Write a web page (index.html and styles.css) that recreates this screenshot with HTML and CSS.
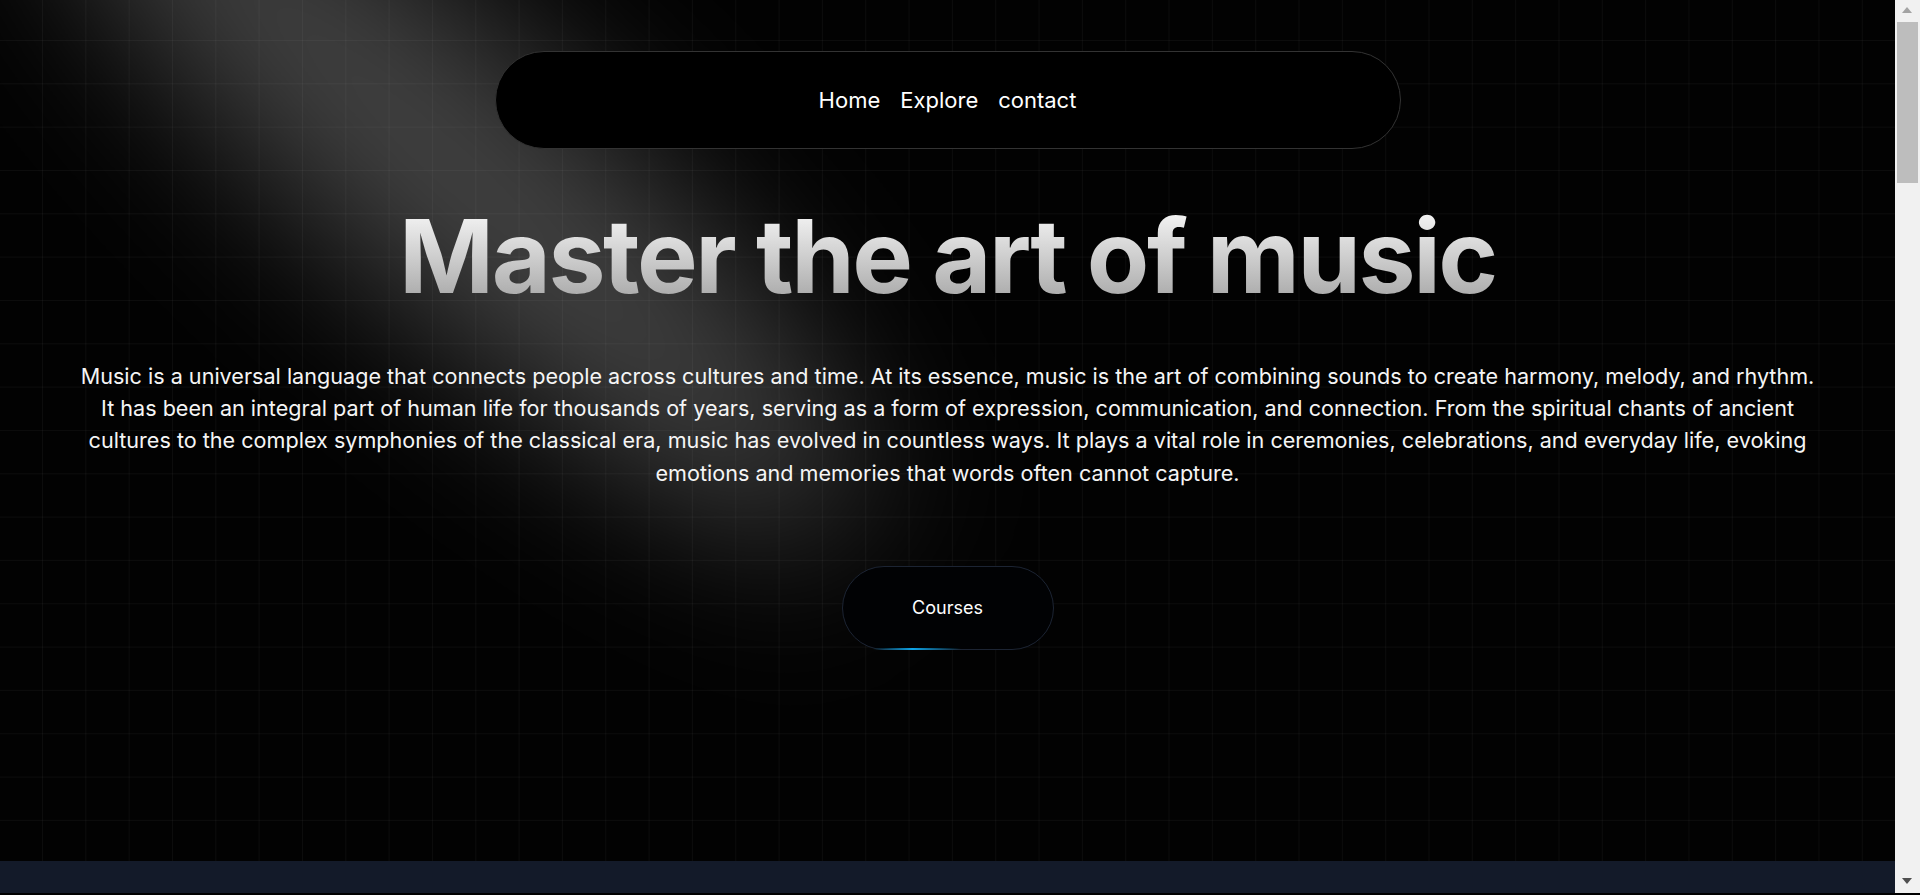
FILE: index.html
```html
<!DOCTYPE html>
<html lang="en">
<head>
<meta charset="utf-8">
<title>Master the art of music</title>
<link rel="stylesheet" href="styles.css">
</head>
<body>
<main class="page">
  <section class="hero">
    <svg class="spotlight" width="1400" height="1000" viewBox="0 0 1400 1000" aria-hidden="true">
      <defs>
        <filter id="blur" filterUnits="userSpaceOnUse" x="-800" y="-800" width="3000" height="3000">
          <feGaussianBlur stdDeviation="80"/>
        </filter>
      </defs>
      <ellipse cx="450" cy="165" rx="540" ry="130" transform="rotate(42 450 165)" fill="#ffffff" fill-opacity="0.25" filter="url(#blur)"/>
    </svg>
    <div class="hero-inner">
      <nav class="nav-pill">
        <a class="nav-link" href="#">Home</a>
        <a class="nav-link" href="#">Explore</a>
        <a class="nav-link" href="#">contact</a>
      </nav>
      <h1 class="title">Master the art of music</h1>
      <p class="lead">Music is a universal language that connects people across cultures and time. At its essence, music is the art of combining sounds to create harmony, melody, and rhythm. It has been an integral part of human life for thousands of years, serving as a form of expression, communication, and connection. From the spiritual chants of ancient cultures to the complex symphonies of the classical era, music has evolved in countless ways. It plays a vital role in ceremonies, celebrations, and everyday life, evoking emotions and memories that words often cannot capture.</p>
      <button class="courses-btn" type="button"><span class="btn-line"></span>Courses</button>
    </div>
  </section>
  <section class="next-section"></section>
</main>
<div class="fake-scrollbar" aria-hidden="true">
  <span class="sb-arrow sb-up"></span>
  <span class="sb-thumb"></span>
  <span class="sb-arrow sb-down"></span>
</div>
<div class="frame-edge" aria-hidden="true"></div>
</body>
</html>
```
FILE: styles.css
```css
* { box-sizing: border-box; }
html, body { margin: 0; padding: 0; }
body {
  background: #020202;
  font-family: Inter, "Noto Sans", "Liberation Sans", sans-serif;
  color: #fff;
}
.page {
  width: calc(100% - 25px);
  display: flex;
  flex-direction: column;
}
.hero {
  position: relative;
  height: 861px;
  overflow: hidden;
  background-color: #020202;
  background-image:
    linear-gradient(to right, rgba(255,255,255,0.04) 1px, transparent 1px),
    linear-gradient(to bottom, rgba(255,255,255,0.04) 1px, transparent 1px);
  background-size: 43.33px 43.33px;
  background-position: 42px 40px;
}
.spotlight {
  position: absolute;
  left: 0;
  top: 0;
  pointer-events: none;
  z-index: 1;
  overflow: visible;
}
.hero-inner {
  position: relative;
  z-index: 2;
  display: flex;
  flex-direction: column;
  align-items: center;
  padding-top: 51px;
}
.nav-pill {
  width: 906px;
  height: 98px;
  border: 1px solid #333;
  border-radius: 49px;
  background: #000;
  display: flex;
  align-items: center;
  justify-content: center;
  gap: 20px;
}
.nav-link {
  color: #fff;
  text-decoration: none;
  font-size: 22px;
}
.title {
  margin: 56px 0 0;
  font-size: 102px;
  line-height: 1;
  font-weight: 700;
  letter-spacing: -0.024em;
  text-align: center;
  background-image: linear-gradient(to bottom, #fafafa, #a3a3a3);
  -webkit-background-clip: text;
  background-clip: text;
  color: transparent;
}
.lead {
  margin: 53px 0 0;
  width: 1745px;
  font-size: 21.6px;
  line-height: 32.2px;
  text-align: center;
  color: #f5f5f5;
}
.courses-btn {
  margin-top: 77px;
  position: relative;
  width: 212px;
  height: 84px;
  border-radius: 42px;
  border: 1px solid #1c2433;
  background: #010204;
  color: #fff;
  font-family: Inter, "Noto Sans", sans-serif;
  font-size: 18px;
  cursor: pointer;
}
.btn-line {
  position: absolute;
  left: 30px;
  bottom: -1px;
  width: 88px;
  height: 2px;
  background: linear-gradient(to right, rgba(14,165,233,0), #0ea5e9 45%, rgba(14,165,233,0));
}
.next-section {
  height: 3925px;
  background: #131a29;
}
.fake-scrollbar {
  position: fixed;
  top: 0;
  right: 0;
  width: 25px;
  height: 100vh;
  background: #f1f1f1;
  z-index: 50;
}
.sb-thumb {
  position: absolute;
  left: 2px;
  right: 2px;
  top: 22px;
  height: 161px;
  background: #bdbdbd;
}
.sb-arrow {
  position: absolute;
  left: 7px;
  width: 0;
  height: 0;
  border-left: 5.5px solid transparent;
  border-right: 5.5px solid transparent;
}
.sb-up {
  top: 7px;
  border-bottom: 6px solid #a3a3a3;
}
.sb-down {
  bottom: 11px;
  border-top: 6px solid #505050;
}
.frame-edge {
  position: fixed;
  left: 0;
  right: 0;
  bottom: 0;
  height: 2px;
  background: #000;
  z-index: 60;
}
```
